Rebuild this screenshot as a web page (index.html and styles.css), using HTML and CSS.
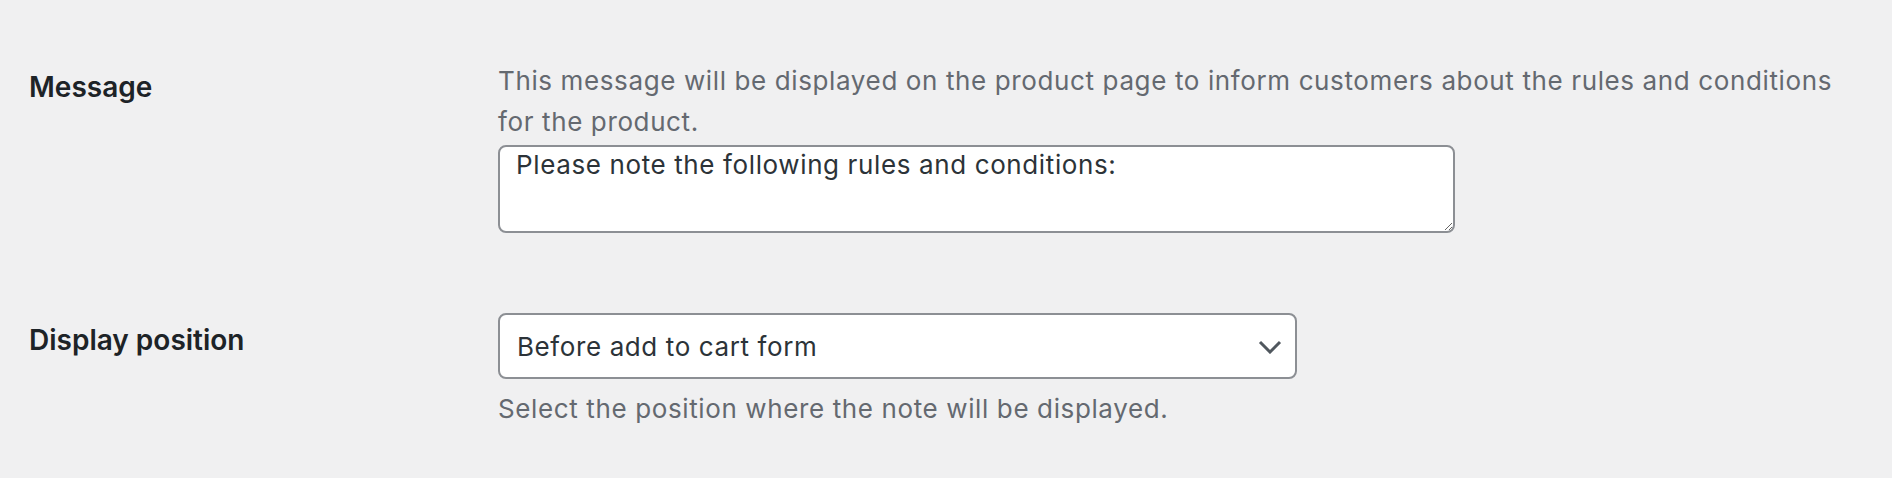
FILE: index.html
```html
<!DOCTYPE html>
<html lang="en">

<head>
    <meta charset="UTF-8">
    <meta name="viewport" content="width=device-width, initial-scale=1.0">
    <title>Product Note Settings</title>
    <link rel="stylesheet" href="styles.css">
</head>

<body>
    <div class="form-table">

        <div class="form-row">
            <div class="form-label">
                <label for="note_message">Message</label>
            </div>
            <div class="form-field">
                <p class="description">This message will be displayed on the product page to inform customers about the rules and conditions for the product.</p>
                <textarea name="note_message" id="note_message" class="note-message">Please note the following rules and conditions:</textarea>
            </div>
        </div>

        <div class="form-row">
            <div class="form-label">
                <label for="note_position">Display position</label>
            </div>
            <div class="form-field">
                <span class="select-wrap">
                    <select name="note_position" id="note_position" class="note-position">
                        <option selected>Before add to cart form</option>
                        <option>After add to cart form</option>
                        <option>Before product summary</option>
                    </select>
                    <svg class="select-arrow" width="24" height="14" viewBox="0 0 24 14">
                        <polyline points="2,2 12,12 22,2" fill="none" stroke="#50575e" stroke-width="3" />
                    </svg>
                </span>
                <p class="description description-help">Select the position where the note will be displayed.</p>
            </div>
        </div>

    </div>
</body>

</html>
```

FILE: styles.css
```css
* {
  margin: 0;
  padding: 0;
  box-sizing: border-box;
  font-family: Inter, "Noto Sans", Arial, sans-serif;
}

body {
  background-color: #f0f0f1;
  color: #1d2327;
}

.form-table {
  display: flex;
  flex-direction: column;
  gap: 80px;
  padding: 60px 47px 0 29px;
}

.form-row {
  display: flex;
}

.form-label {
  width: 469px;
  flex-shrink: 0;
  padding-top: 7px;
}

.form-label label {
  font-size: 28px;
  font-weight: 600;
  line-height: 40px;
  color: #1d2327;
}

.form-field {
  flex: 1;
}

.description {
  font-size: 26px;
  line-height: 41px;
  letter-spacing: 0.62px;
  color: #646970;
}

.description-help {
  margin-top: 9px;
}

.note-message {
  display: block;
  width: 957px;
  height: 88px;
  margin-top: 3px;
  padding: 2px 16px;
  font-size: 26px;
  line-height: 32px;
  letter-spacing: 0.62px;
  color: #2c3338;
  background-color: #fff;
  border: 2px solid #8c8f94;
  border-radius: 8px;
  outline: none;
}

.select-wrap {
  position: relative;
  display: block;
  width: 799px;
}

.note-position {
  display: block;
  width: 100%;
  height: 66px;
  padding: 0 60px 0 17px;
  font-size: 26px;
  letter-spacing: 0.6px;
  color: #2c3338;
  background-color: #fff;
  border: 2px solid #8c8f94;
  border-radius: 8px;
  appearance: none;
  -webkit-appearance: none;
  outline: none;
}

.select-arrow {
  position: absolute;
  top: 27px;
  right: 15px;
  pointer-events: none;
}
```
